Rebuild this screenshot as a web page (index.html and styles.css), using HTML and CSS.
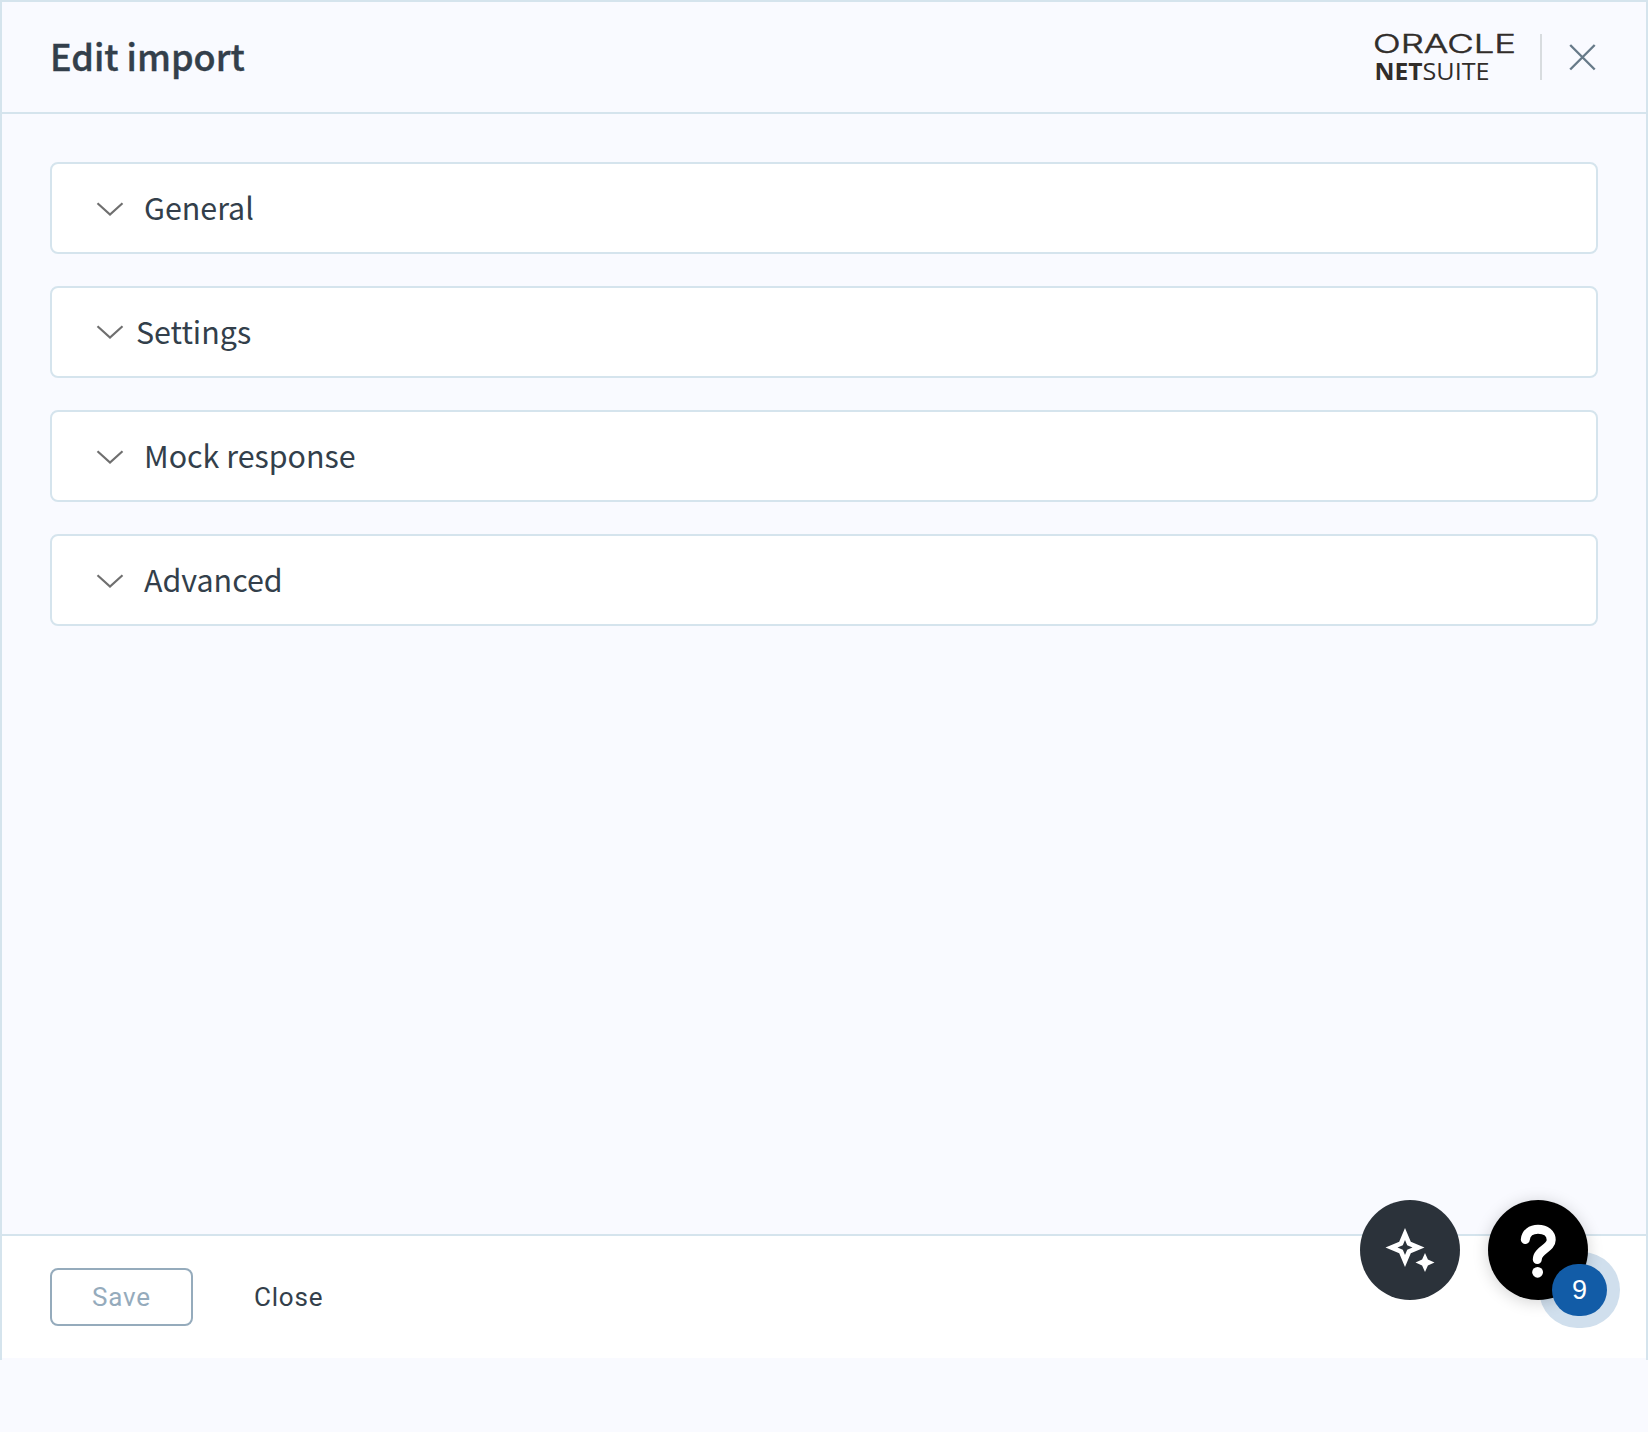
FILE: index.html
```html
<!DOCTYPE html>
<html lang="en">
<head>
<meta charset="utf-8">
<title>Edit import</title>
<link rel="stylesheet" href="styles.css">
</head>
<body>
<div class="drawer">
  <header class="header">
    <h1 class="title">Edit import</h1>
    <svg class="logo" width="150" height="76" viewBox="0 0 150 76" role="img" aria-label="Oracle NetSuite">
      <text class="oracle" x="2" y="34" textLength="143" lengthAdjust="spacingAndGlyphs">ORACLE</text>
      <text class="net" x="3.500" y="61" textLength="48" lengthAdjust="spacingAndGlyphs">NET</text>
      <text class="suite" x="51.500" y="61" textLength="67" lengthAdjust="spacingAndGlyphs">SUITE</text>
    </svg>
    <span class="divider"></span>
    <button class="close-icon" aria-label="Close">
      <svg width="28" height="28" viewBox="0 0 28 28"><path d="M1.200 2 25.700 26.500M25.700 2 1.200 26.500"/></svg>
    </button>
  </header>
  <main class="content">
    <section class="card"><svg class="chevron" width="28" height="18" viewBox="0 0 28 18"><path d="M1.500 4.200 14 15.500 26.500 4.200"/></svg><h2>General</h2></section>
    <section class="card tight"><svg class="chevron" width="28" height="18" viewBox="0 0 28 18"><path d="M1.500 3.200 14 14.500 26.500 3.200"/></svg><h2>Settings</h2></section>
    <section class="card"><svg class="chevron" width="28" height="18" viewBox="0 0 28 18"><path d="M1.500 4.200 14 15.500 26.500 4.200"/></svg><h2>Mock response</h2></section>
    <section class="card"><svg class="chevron" width="28" height="18" viewBox="0 0 28 18"><path d="M1.500 4.200 14 15.500 26.500 4.200"/></svg><h2>Advanced</h2></section>
  </main>
  <footer class="footer">
    <button class="save" disabled>Save</button>
    <button class="close">Close</button>
  </footer>
</div>
<div class="floating">
  <button class="fab ai" aria-label="Assistant">
    <svg width="100" height="100" viewBox="0 0 100 100"><path fill-rule="evenodd" d="M45 28 50.800 41.700 64.500 47.500 50.800 53.300 45 67 39.200 53.300 25.500 47.500 39.200 41.700ZM45 40 42.800 45.300 37.500 47.500 42.800 49.700 45 55 47.200 49.700 52.500 47.500 47.200 45.300Z"/><path d="M65 53 67.900 59.600 74.500 62.500 67.900 65.400 65 72 62.100 65.400 55.500 62.500 62.100 59.600Z"/></svg>
  </button>
  <button class="fab help" aria-label="Help">
    <svg width="100" height="100" viewBox="0 0 100 100"><path d="M37.300 39.500C38 33 43 29.300 50 29.300C58 29.300 63.200 33.500 63.200 40C63.200 48.500 49.300 50 49.300 59.500"/><circle cx="49.600" cy="72.300" r="5.400"/></svg>
    <span class="badge">9</span>
  </button>
</div>
</body>
</html>
```
FILE: styles.css
```css
* { box-sizing: border-box; }
body {
  margin: 0;
  height: 1432px;
  background: #f9faff;
  color: #333f4b;
  font-family: "Noto Sans CJK SC", "Noto Sans", sans-serif;
}
button { padding: 0; border: 0; background: none; font: inherit; }
.drawer {
  display: flex;
  flex-direction: column;
  height: 1360px;
  border: 2px solid #d5e4ed;
  border-bottom: 0;
  padding-bottom: 2px;
}
.header {
  display: flex;
  align-items: center;
  height: 112px;
  padding: 0 49px 0 48px;
  border-bottom: 2px solid #d5e4ed;
}
.title {
  flex: 1;
  margin: 0;
  padding-bottom: 5px;
  font-size: 36px;
  font-weight: 500;
  line-height: 56px;
  -webkit-text-stroke: .4px currentColor;
}
.logo { display: block; margin-right: 19px; overflow: visible; fill: #312d2a; font-family: "Open Sans", sans-serif; }
.oracle { font-family: Inter, sans-serif; font-size: 25.500px; font-weight: 300; stroke: #312d2a; stroke-width: .5px; }
.net { font-size: 24px; font-weight: 700; }
.suite { font-size: 24px; font-weight: 400; }
.divider { width: 2px; height: 46px; margin-right: 27px; background: #d8dcdf; }
.close-icon { display: flex; width: 28px; height: 28px; }
.close-icon path { fill: none; stroke: #677a89; stroke-width: 2.400; }
.content {
  flex: 1;
  display: flex;
  flex-direction: column;
  gap: 32px;
  padding: 48px;
}
.card {
  display: flex;
  align-items: center;
  gap: 20px;
  height: 92px;
  padding-left: 44px;
  border: 2px solid #d5e4ed;
  border-radius: 8px;
  background: #fff;
}
.card.tight { gap: 12px; }
.card h2 { margin: 0; padding-bottom: 2px; font-size: 30.400px; font-weight: 400; line-height: 44px; }
.chevron { fill: none; stroke: #6f6f6f; stroke-width: 2.200; }
.footer {
  display: flex;
  align-items: center;
  height: 124px;
  padding: 0 48px;
  border-top: 2px solid #d5e4ed;
  background: #fff;
  font-family: Roboto, sans-serif;
  font-size: 26px;
  letter-spacing: .800px;
}
.save {
  width: 143px;
  height: 58px;
  border: 2px solid #95abbc;
  border-radius: 8px;
  color: #95abbc;
  letter-spacing: inherit;
}
.close { margin-left: 61px; color: #333f4b; letter-spacing: inherit; }
.floating { position: absolute; z-index: 1; left: 1360px; top: 1200px; display: flex; gap: 28px; }
.fab { position: relative; width: 100px; height: 100px; border-radius: 50%; }
.fab svg { display: block; fill: #fff; }
.ai { background: #2b323a; }
.help { background: #000; box-shadow: 0 2px 16px rgba(0, 0, 0, .18); }
.help path { fill: none; stroke: #fff; stroke-width: 9; stroke-linecap: round; }
.help::before {
  content: "";
  position: absolute;
  z-index: -1;
  left: 51px;
  top: 52px;
  width: 81px;
  height: 76px;
  border-radius: 40px;
  background: #d0dfed;
}
.badge {
  position: absolute;
  left: 64px;
  top: 64px;
  width: 55px;
  height: 52px;
  border-radius: 26px;
  background: #125ca7;
  color: #fff;
  font: 27px/52px "Liberation Sans", Arial, sans-serif;
  text-align: center;
}
```
